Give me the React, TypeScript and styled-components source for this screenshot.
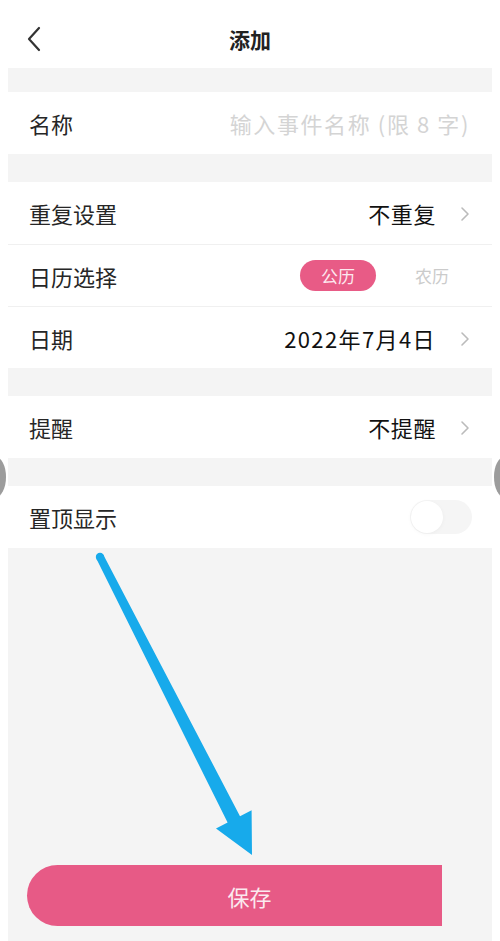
import React, { useState } from "react";
import styled, { createGlobalStyle } from "styled-components";

const GlobalStyle = createGlobalStyle`
  * { box-sizing: border-box; }
  body {
    margin: 0;
    background: #ffffff;
    font-family: "Noto Sans CJK SC", "Noto Sans", "Liberation Sans", sans-serif;
    color: #222;
  }
`;

const Chevron = ({ color = "#bbb" }: { color?: string }) => (
  <svg width="10" height="16" viewBox="0 0 10 16">
    <path d="M2 2 L8 8 L2 14" fill="none" stroke={color} strokeWidth="1.6" strokeLinecap="round" strokeLinejoin="round" />
  </svg>
);

const App = () => {
  const [calendar, setCalendar] = useState<"solar" | "lunar">("solar");
  const [pinned, setPinned] = useState(false);

  return (
    <Page>
      <GlobalStyle />
      <Header>
        <BackButton>
          <svg width="16" height="26" viewBox="0 0 16 26">
            <path d="M13 2 L3 13 L13 24" fill="none" stroke="#333" strokeWidth="2.2" strokeLinecap="round" strokeLinejoin="round" />
          </svg>
        </BackButton>
        <Title>添加</Title>
      </Header>

      <Body>
        <Group $top={24}>
          <Row>
            <Label>名称</Label>
            <NameInput placeholder="输入事件名称 (限 8 字)" />
          </Row>
        </Group>

        <Group>
          <Row>
            <Label>重复设置</Label>
            <Value>
              不重复
              <Chevron />
            </Value>
          </Row>
          <Row>
            <Label>日历选择</Label>
            <Switcher>
              <CalendarPill $active={calendar === "solar"} onClick={() => setCalendar("solar")}>
                公历
              </CalendarPill>
              <CalendarPill $active={calendar === "lunar"} onClick={() => setCalendar("lunar")}>
                农历
              </CalendarPill>
            </Switcher>
          </Row>
          <Row>
            <Label>日期</Label>
            <Value $wide>
              2022年7月4日
              <Chevron />
            </Value>
          </Row>
        </Group>

        <Group>
          <Row>
            <Label>提醒</Label>
            <Value>
              不提醒
              <Chevron />
            </Value>
          </Row>
        </Group>

        <Group>
          <Row>
            <Label>置顶显示</Label>
            <Toggle $on={pinned} onClick={() => setPinned(!pinned)}>
              <Knob $on={pinned} />
            </Toggle>
          </Row>
        </Group>

        <Spacer />

        <SaveButton>保存</SaveButton>
      </Body>

      <EdgeBump $side="left" />
      <EdgeBump $side="right" />

      <Annotation width="500" height="941" viewBox="0 0 500 941">
        <circle cx="100" cy="557" r="4.2" fill="#17aaeb" />
        <polygon
          points="96.4,558.8 103.6,555.2 240,816.2 251.6,810.3 252,855 216,828.5 227.6,822.6"
          fill="#17aaeb"
        />
      </Annotation>
    </Page>
  );
};

const Page = styled.div`
  position: relative;
  width: 500px;
  min-height: 941px;
  background: #ffffff;
  display: flex;
  flex-direction: column;
  overflow: hidden;
`;

const Header = styled.div`
  height: 68px;
  display: flex;
  align-items: center;
  justify-content: center;
  position: relative;
`;

const BackButton = styled.div`
  position: absolute;
  left: 26px;
  top: 26px;
  display: flex;
`;

const Title = styled.div`
  font-size: 21px;
  font-weight: 700;
  color: #222;
  margin-top: 10px;
`;

const Body = styled.div`
  flex: 1;
  margin: 0 8px;
  background: #f4f4f4;
  display: flex;
  flex-direction: column;
`;

const Group = styled.div<{ $top?: number }>`
  margin-top: ${(p) => p.$top ?? 28}px;
  background: #ffffff;
  display: flex;
  flex-direction: column;
  & > * + * {
    border-top: 1px solid #f0f0f0;
  }
`;

const Row = styled.div`
  height: 62px;
  display: flex;
  align-items: center;
  justify-content: space-between;
  padding: 0 22px 0 21px;
`;

const Label = styled.div`
  font-size: 22px;
  color: #262626;
`;

const Value = styled.div<{ $wide?: boolean }>`
  display: flex;
  align-items: center;
  gap: 24px;
  font-size: 22px;
  letter-spacing: ${(p) => (p.$wide ? "1.4px" : "0.6px")};
  color: #111;
  svg {
    margin-top: 2px;
  }
`;

const NameInput = styled.input`
  border: none;
  outline: none;
  background: transparent;
  text-align: right;
  font-family: inherit;
  font-size: 22px;
  letter-spacing: 1.6px;
  width: 290px;
  padding: 0;
  color: #222;
  &::placeholder {
    color: #d4d4d4;
  }
`;

const Switcher = styled.div`
  display: flex;
  align-items: center;
  gap: 18px;
  margin-right: 0;
`;

const CalendarPill = styled.div<{ $active: boolean }>`
  width: 76px;
  height: 31px;
  border-radius: 16px;
  display: flex;
  align-items: center;
  justify-content: center;
  font-size: 17px;
  background: ${(p) => (p.$active ? "#e85b86" : "transparent")};
  color: ${(p) => (p.$active ? "#fde8ef" : "#cbcbcb")};
  cursor: pointer;
`;

const Toggle = styled.div<{ $on: boolean }>`
  width: 62px;
  height: 34px;
  border-radius: 17px;
  background: ${(p) => (p.$on ? "#e85b86" : "#f5f5f5")};
  position: relative;
  margin-right: -2px;
  cursor: pointer;
`;

const Knob = styled.div<{ $on: boolean }>`
  position: absolute;
  top: 1px;
  left: ${(p) => (p.$on ? "29px" : "1px")};
  width: 32px;
  height: 32px;
  border-radius: 50%;
  background: #fff;
  box-shadow: 0 1px 4px rgba(0, 0, 0, 0.04);
`;

const Spacer = styled.div`
  flex: 1;
`;

const SaveButton = styled.button`
  margin: 0 0 15px 19px;
  width: 415px;
  height: 61px;
  border: none;
  border-radius: 31px 0 0 31px;
  background: #e75a86;
  color: #fbe9ef;
  font-family: inherit;
  font-size: 22px;
  padding: 0 0 0 30px;
  cursor: pointer;
`;

const EdgeBump = styled.div<{ $side: "left" | "right" }>`
  position: absolute;
  top: 457px;
  ${(p) => p.$side}: -15px;
  width: 21px;
  height: 40px;
  border-radius: 50%;
  background: #9c9c9c;
`;

const Annotation = styled.svg`
  position: absolute;
  left: 0;
  top: 0;
  pointer-events: none;
`;

export default App;
